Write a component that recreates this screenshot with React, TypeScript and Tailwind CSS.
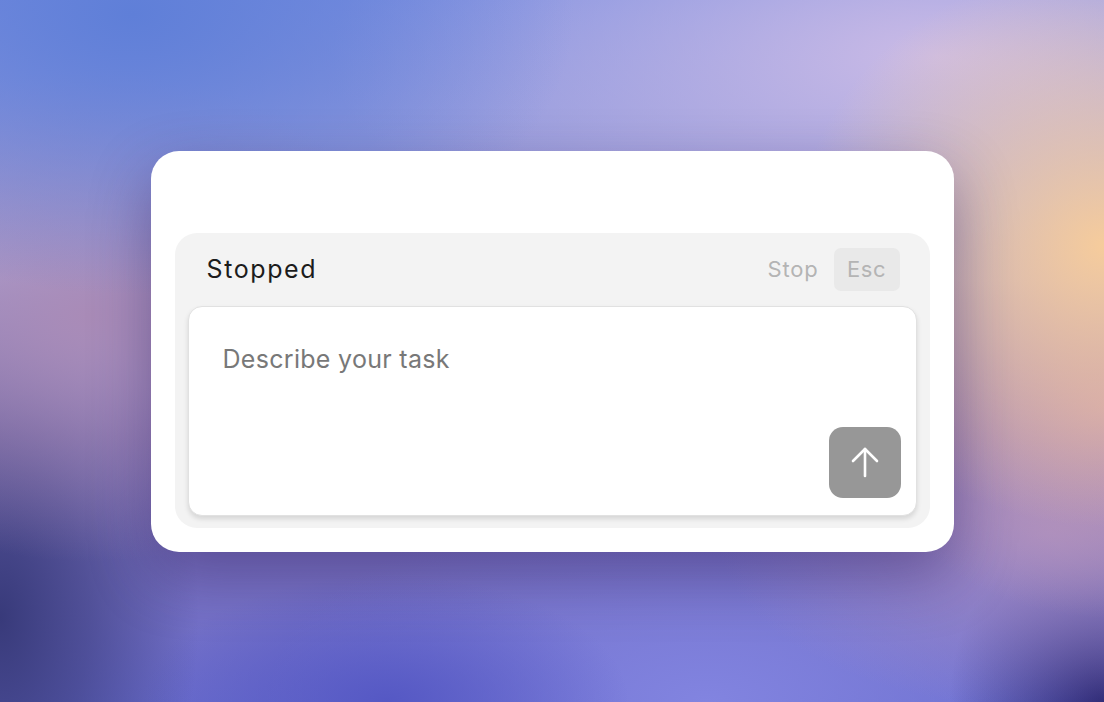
import React from "react";

export default function App() {
  return (
    <div
      className="relative flex h-[702px] w-full items-center justify-center overflow-hidden bg-[#7a86d8] bg-[image:radial-gradient(ellipse_28%_40%_at_100%_35%,#f6cc9c_0%,rgba(246,204,156,0.55)_45%,rgba(246,204,156,0)_100%),radial-gradient(ellipse_22%_30%_at_100%_58%,#c49ab0_0%,rgba(196,154,176,0)_100%),radial-gradient(ellipse_30%_25%_at_95%_76%,#a28ac4_0%,rgba(162,138,196,0)_100%),radial-gradient(ellipse_40%_40%_at_12%_2%,#5f7fd8_0%,rgba(95,127,216,0)_100%),radial-gradient(ellipse_55%_35%_at_85%_8%,#cbbbe6_0%,rgba(203,187,230,0)_100%),radial-gradient(ellipse_30%_35%_at_8%_45%,#a98bb7_0%,rgba(169,139,183,0)_100%),radial-gradient(ellipse_18%_48%_at_0%_88%,#383a7a_0%,rgba(56,58,122,0.6)_45%,rgba(56,58,122,0)_100%),radial-gradient(ellipse_22%_18%_at_35%_100%,#5558c4_0%,rgba(85,88,196,0)_100%),radial-gradient(ellipse_14%_26%_at_100%_100%,#2e2a76_0%,rgba(46,42,118,0)_100%),radial-gradient(ellipse_40%_30%_at_64%_100%,#8284e0_0%,rgba(130,132,224,0)_100%),linear-gradient(180deg,#7c8fe0_0%,#a7a3d8_40%,#8c7cbc_62%,#6a6ccc_100%)]"
      style={{ fontFamily: "Inter, 'Noto Sans', sans-serif" }}
    >
      <div className="w-[803px] h-[401px] rounded-[28px] bg-white px-6 pt-[82px] pb-6 shadow-[0_24px_60px_rgba(40,25,90,0.42)]">
        <div className="flex h-full flex-col rounded-[22px] bg-[#f3f3f3] px-[13px] pb-3">
          <div className="flex h-[73px] shrink-0 items-center justify-between pl-[19px] pr-[17px]">
            <span className="text-[25px] leading-none text-[#1c1c1c] tracking-[1.6px]">Stopped</span>
            <div className="flex items-center gap-[15px]">
              <span className="text-[22px] leading-none text-[#b4b4b4] tracking-[0.8px]">Stop</span>
              <span className="flex h-[43px] w-[66px] items-center justify-center rounded-[7px] bg-[#e9e9e9] text-[22px] leading-none text-[#b4b4b4] tracking-[0.5px]">
                Esc
              </span>
            </div>
          </div>
          <div className="relative flex flex-1 flex-col rounded-[14px] border-[1.5px] border-[#e1e1e1] bg-white px-[34px] pt-[38px] shadow-[0_3px_5px_rgba(0,0,0,0.12)]">
            <span className="text-[25px] leading-[29px] text-[#787878] tracking-[0.3px]">Describe your task</span>
            <div className="mt-auto mb-[17px] flex justify-end -mr-[19px]">
              <button className="flex h-[71px] w-[72px] items-center justify-center rounded-[14px] bg-[#979797]">
                <svg width="32" height="32" viewBox="0 0 32 32" fill="none" stroke="white" strokeWidth="2.6" strokeLinecap="round" strokeLinejoin="round">
                  <path d="M16 30V3" />
                  <path d="M4 15L16 3L28 15" />
                </svg>
              </button>
            </div>
          </div>
        </div>
      </div>
    </div>
  );
}
